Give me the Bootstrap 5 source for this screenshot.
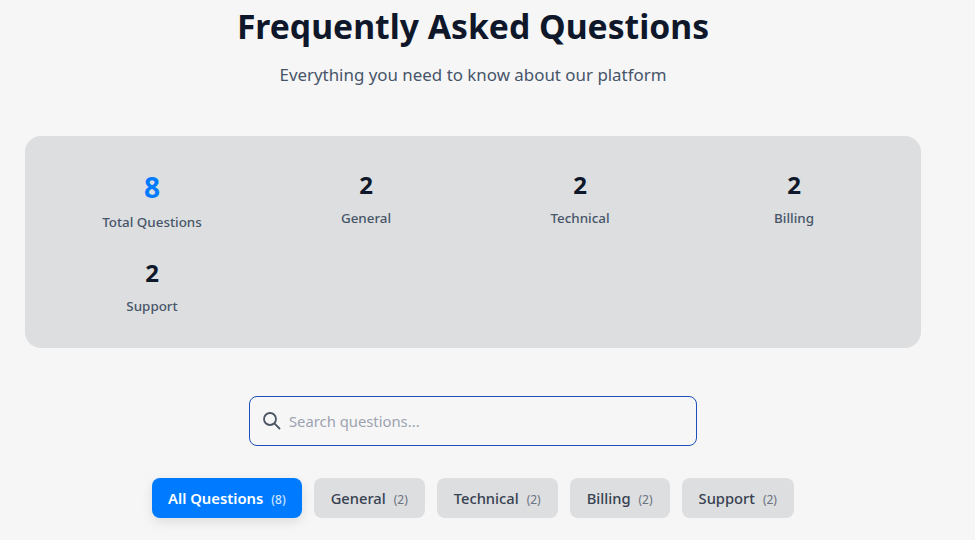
<!DOCTYPE html>
<html lang="en">
<head>
    <meta charset="UTF-8">
    <meta name="viewport" content="width=device-width, initial-scale=1.0">
    <title>FAQ</title>
    <link href="https://cdn.jsdelivr.net/npm/bootstrap@5.3.0/dist/css/bootstrap.min.css" rel="stylesheet">
    <style>
        html, body {
            height: 540px;
            overflow: hidden;
        }

        body {
            background: #f6f6f7;
            font-family: "Noto Sans", "Open Sans", sans-serif;
            color: #0f172a;
        }

        .faq-page {
            width: 946px;
            padding: 0 25px;
        }

        .faq-title {
            font-size: 33.7px;
            line-height: 52px;
            font-weight: 700;
            margin: 0 0 8px;
            color: #0f172a;
        }

        .faq-sub {
            font-size: 16.9px;
            line-height: 30px;
            color: #475569;
            margin: 0 0 46px;
        }

        .stats-panel {
            background: #dcdedf;
            border-radius: 16px;
            padding: 32px;
            display: grid;
            grid-template-columns: repeat(4, 1fr);
            gap: 24px;
            height: 212px;
            margin-bottom: 48px;
            align-content: start;
        }

        .stat-num {
            font-size: 24px;
            line-height: 34px;
            font-weight: 700;
        }

        .stat-num-main {
            font-size: 28px;
            line-height: 38px;
            color: #007bff;
        }

        .stat-label {
            font-size: 13.4px;
            line-height: 20px;
            font-weight: 500;
            color: #475569;
            margin-top: 6px;
        }

        .search-box {
            width: 448px;
            height: 50px;
            border: 1px solid #1d4fb8;
            border-radius: 8px;
            padding: 0 12px;
            margin-bottom: 32px;
        }

        .search-box input {
            border: 0;
            outline: 0;
            padding: 0;
            background: transparent;
            font-size: 14.8px;
            color: #0f172a;
            flex: 1;
            min-width: 0;
        }

        .search-box input::placeholder {
            color: #9ca3af;
            opacity: 1;
        }

        .search-gap {
            gap: 7px;
        }

        .filter-row {
            gap: 12px;
        }

        .filter-btn {
            height: 40px;
            padding: 0 17px;
            border: 0;
            border-radius: 8px;
            background: #dcdedf;
            color: #374151;
            font-size: 14.7px;
            font-weight: 500;
        }

        .filter-btn.is-active {
            padding: 0 16px;
            background: #007bff;
            color: #fff;
            font-size: 14.8px;
            font-weight: 600;
            box-shadow: 0 4px 12px rgba(0, 0, 0, 0.1);
        }

        .filter-count {
            font-size: 12px;
            font-weight: 400;
            margin-left: 8px;
            color: #6b7280;
        }

        .is-active .filter-count {
            font-weight: 500;
            color: #cfe4ff;
        }
    </style>
</head>
<body>
    <div class="faq-page">
        <header class="text-center">
            <h1 class="faq-title">Frequently Asked Questions</h1>
            <p class="faq-sub">Everything you need to know about our platform</p>
        </header>

        <section class="stats-panel text-center">
            <div>
                <div class="stat-num stat-num-main">8</div>
                <div class="stat-label">Total Questions</div>
            </div>
            <div>
                <div class="stat-num">2</div>
                <div class="stat-label">General</div>
            </div>
            <div>
                <div class="stat-num">2</div>
                <div class="stat-label">Technical</div>
            </div>
            <div>
                <div class="stat-num">2</div>
                <div class="stat-label">Billing</div>
            </div>
            <div>
                <div class="stat-num">2</div>
                <div class="stat-label">Support</div>
            </div>
        </section>

        <div class="search-box search-gap d-flex align-items-center mx-auto">
            <svg width="20" height="20" viewBox="0 0 20 20" fill="none" stroke="#4b5563" stroke-width="1.8" stroke-linecap="round">
                <circle cx="8" cy="8" r="6"/>
                <path d="M12.6 12.6l4.9 4.9"/>
            </svg>
            <input type="text" placeholder="Search questions...">
        </div>

        <div class="filter-row d-flex justify-content-center">
            <button type="button" class="filter-btn is-active">All Questions<span class="filter-count">(8)</span></button>
            <button type="button" class="filter-btn">General<span class="filter-count">(2)</span></button>
            <button type="button" class="filter-btn">Technical<span class="filter-count">(2)</span></button>
            <button type="button" class="filter-btn">Billing<span class="filter-count">(2)</span></button>
            <button type="button" class="filter-btn">Support<span class="filter-count">(2)</span></button>
        </div>
    </div>

    <script src="https://cdn.jsdelivr.net/npm/bootstrap@5.3.0/dist/js/bootstrap.bundle.min.js"></script>
</body>
</html>
